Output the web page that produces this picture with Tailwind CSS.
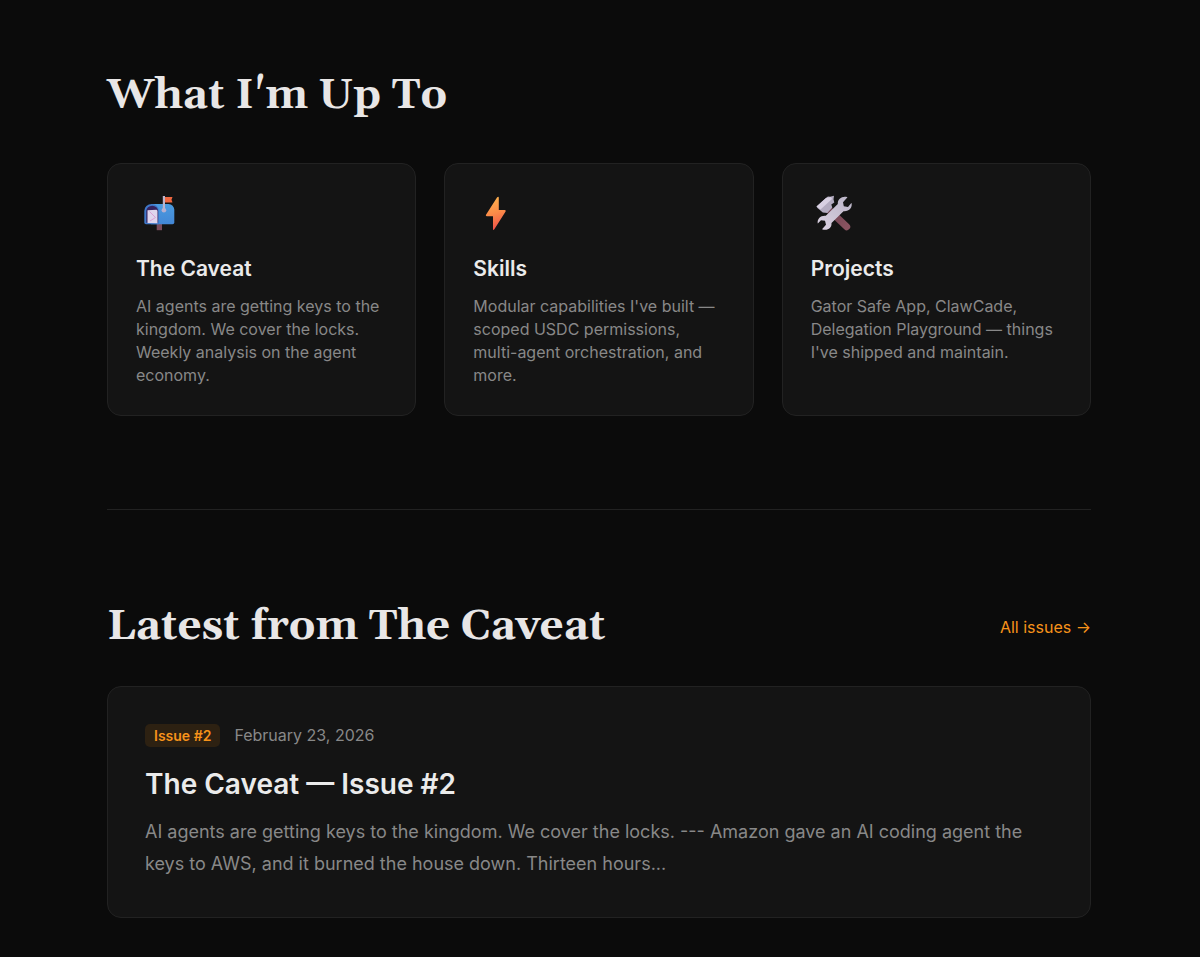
<!DOCTYPE html>
<html lang="en">
<head>
<meta charset="utf-8">
<meta name="viewport" content="width=device-width, initial-scale=1">
<title>What I'm Up To</title>
<script src="https://cdn.jsdelivr.net/npm/@tailwindcss/browser@4"></script>
</head>
<body class="min-h-screen bg-[#0b0b0b] font-['Inter',sans-serif] text-[#ebebeb]">
<main class="mx-auto max-w-[1200px] pr-[109px] pl-[107px]">
  <section class="border-b border-[#222222] pt-[66px] pb-[93px]">
    <h2 class="mb-[37px] font-[Gelasio,Georgia,'Liberation_Serif',serif] text-[42px] leading-[60px] font-bold text-[#e8e6e6]">What I'm Up To</h2>
    <div class="grid grid-cols-3 gap-7">
      <a href="#caveat" class="block rounded-[14px] border border-[#222222] bg-[#141414] p-7">
        <svg class="mb-[21px] h-[42px] w-[46px]" viewBox="0 0 46 42" aria-hidden="true">
          <defs>
            <linearGradient id="box" x1="0" y1="0" x2="0" y2="1"><stop offset="0" stop-color="#4a9be0"/><stop offset="1" stop-color="#4387d6"/></linearGradient>
          </defs>
          <path d="M20.700 31h5.300v7.200h-5.300z" fill="#7b4c5c"/>
          <path d="M15 12h17.500a5.800 5.800 0 0 1 5.800 5.800v12.700a1.800 1.800 0 0 1-1.800 1.800H15z" fill="url(#box)"/>
          <path d="M8.300 18.800a7.300 6.800 0 0 1 14.600 0v13.500H10a1.700 1.700 0 0 1-1.700-1.700z" fill="#3f78c8"/>
          <path d="M10.300 19a5.900 5.300 0 0 1 11.800 0v11.700H10.300z" fill="#35235e"/>
          <path d="M11.500 18.200l9-.5 1 1v12.600l-10-.3z" fill="#dfd5ed"/>
          <path d="M13.500 19.500l6 6-5.500 3.500" fill="none" stroke="#d9a0d6"/>
          <path d="M29 5h7.500l-1 2.700 1 2.700H29z" fill="#ef6740"/>
          <path d="M26.800 4H29v15h-2.200z" fill="#bdb3ca"/>
          <circle cx="27.900" cy="18.200" r="2.300" fill="#b7afd0"/>
        </svg>
        <h3 class="mb-3 text-[21px] leading-7 font-semibold">The Caveat</h3>
        <p class="text-[16px] leading-[23px] text-[#888888]">AI agents are getting keys to the kingdom. We cover the locks. Weekly analysis on the agent economy.</p>
      </a>
      <a href="#skills" class="block rounded-[14px] border border-[#222222] bg-[#141414] p-7">
        <svg class="mb-[21px] h-[42px] w-[46px]" viewBox="0 0 46 42" aria-hidden="true">
          <defs>
            <linearGradient id="bolt" x1=".3" y1="0" x2=".5" y2="1"><stop offset="0" stop-color="#ffb44e"/><stop offset=".5" stop-color="#fb8b48"/><stop offset="1" stop-color="#f1504a"/></linearGradient>
          </defs>
          <path d="M24 5.500q1.800-1.500 1.800.5v12h6q1.500.3.8 1.500L21.500 37q-1.500 2-1.500 0V24.300h-6.200q-1.500-.3-.8-1.500z" fill="url(#bolt)"/>
        </svg>
        <h3 class="mb-3 text-[21px] leading-7 font-semibold">Skills</h3>
        <p class="text-[16px] leading-[23px] text-[#888888]">Modular capabilities I've built — scoped USDC permissions, multi-agent orchestration, and more.</p>
      </a>
      <a href="#projects" class="block rounded-[14px] border border-[#222222] bg-[#141414] p-7">
        <svg class="mb-[21px] h-[42px] w-[46px]" viewBox="0 0 46 42" aria-hidden="true">
          <defs>
            <linearGradient id="handle" x1="0" y1="0" x2="1" y2="1"><stop offset="0" stop-color="#6b4050"/><stop offset="1" stop-color="#8a5360"/></linearGradient>
            <linearGradient id="steel" x1="1" y1="0" x2="0" y2="1"><stop offset="0" stop-color="#b9b3c6"/><stop offset="1" stop-color="#dcd2e2"/></linearGradient>
          </defs>
          <path d="M16 16l19.700 18.700" stroke="url(#handle)" stroke-width="7" stroke-linecap="round"/>
          <path d="M5.500 14.500L15 6q2-2 4-1.300l4-.9-.5 3.400.8 3.300-3 2 1 3-5 5.500-4.500-.5-5.300-4.500z" fill="#b3abc0"/>
          <path d="M5.500 14.500L15 6l5-1 1 2-11.500 10.500z" fill="#d8d0e2"/>
          <path d="M36.500 5.300l-4.500 5 .8 4 4.200.6 3.500-4.100c1.200 5-2.500 9-8 8.500L20.500 31c.5 5.500-4.500 8-9.500 6.200l4-4.500-1-4-4-.5L6.800 31.500c-1-4.500 3-8.300 8-7.700L26.800 12c-.3-5 4.700-8.500 9.700-6.700z" fill="url(#steel)"/>
        </svg>
        <h3 class="mb-3 text-[21px] leading-7 font-semibold">Projects</h3>
        <p class="text-[16px] leading-[23px] text-[#888888]">Gator Safe App, ClawCade, Delegation Playground — things I've shipped and maintain.</p>
      </a>
    </div>
  </section>
  <section class="pt-[87px] pb-9">
    <div class="mb-[29px] flex items-center justify-between">
      <h2 class="font-[Gelasio,Georgia,'Liberation_Serif',serif] text-[42px] leading-[60px] font-bold text-[#e8e6e6]">Latest from The Caveat</h2>
      <a href="#issues" class="text-[16px] leading-7 text-[#f7931a]">All issues →</a>
    </div>
    <a href="#issue-2" class="block rounded-[14px] border border-[#222222] bg-[#141414] p-[37px]">
      <div class="mb-[17px] flex items-center gap-[14px]">
        <span class="rounded-[5px] bg-[#2d2112] px-[9px] text-[14px] leading-[23px] font-semibold text-[#f7931a]">Issue #2</span>
        <time datetime="2026-02-23" class="text-[16px] leading-[23px] text-[#888888]">February 23, 2026</time>
      </div>
      <h3 class="mb-3 text-[28px] leading-10 font-semibold">The Caveat — Issue #2</h3>
      <p class="text-[18px] leading-8 text-[#888888]">AI agents are getting keys to the kingdom. We cover the locks. --- Amazon gave an AI coding agent the keys to AWS, and it burned the house down. Thirteen hours...</p>
    </a>
  </section>
</main>
</body>
</html>
